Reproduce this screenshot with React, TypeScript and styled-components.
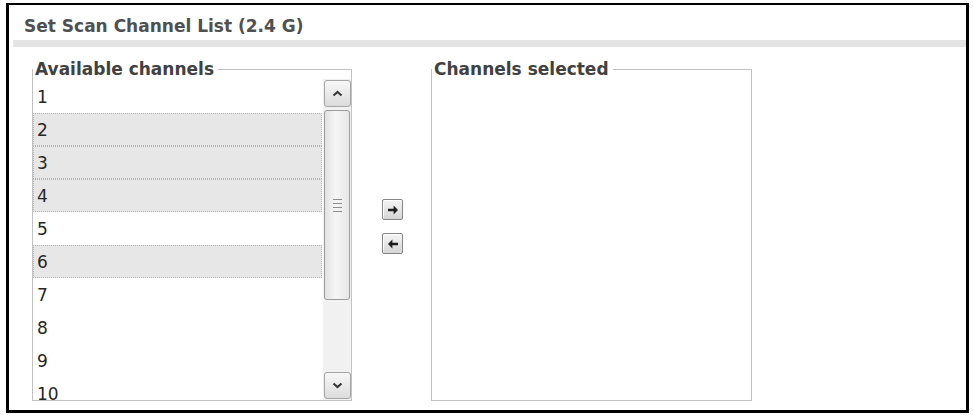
import React from "react";
import styled, { createGlobalStyle } from "styled-components";

const Global = createGlobalStyle`
  html, body { margin: 0; padding: 0; background: #fff; }
  body { font-family: "DejaVu Sans", Verdana, sans-serif; }
`;

const Frame = styled.div`
  box-sizing: border-box;
  margin: 3px 0 0 6px;
  width: 963px;
  height: 410px;
  border: 3px solid #000;
  border-top-width: 2px;
  display: flex;
  flex-direction: column;
`;

const Title = styled.h1`
  margin: 11px 0 0 15px;
  font-size: 17px;
  line-height: 20px;
  font-weight: bold;
  color: #505050;
`;

const Rule = styled.div`
  margin: 4px 0 0 4px;
  height: 7px;
  background: #e4e4e4;
`;

const Body = styled.div`
  display: flex;
  margin: 12px 0 0 23px;
`;

const Box = styled.fieldset<{ $w: number }>`
  box-sizing: border-box;
  margin: 0;
  padding: 0;
  min-width: 0;
  width: ${(p) => p.$w}px;
  height: 342px;
  border: 1px solid #c2c2c2;
  display: flex;
  flex-direction: row;
`;

const Legend = styled.legend`
  padding: 0 4px 0 2px;
  margin: 0;
  font-size: 17px;
  line-height: 20px;
  font-weight: bold;
  color: #414141;
`;

const Items = styled.div`
  flex: 1;
  height: 321px;
  overflow: hidden;
  padding-top: 1px;
  box-sizing: border-box;
`;

const Row = styled.div<{ $sel?: boolean }>`
  box-sizing: border-box;
  height: 33px;
  display: flex;
  align-items: center;
  padding-left: 3px;
  margin-right: 1px;
  font-size: 17px;
  color: #262626;
  background: ${(p) => (p.$sel ? "#e7e7e7" : "transparent")};
  border: 1px dotted ${(p) => (p.$sel ? "#b4b4b4" : "transparent")};
`;

const Scrollbar = styled.div`
  width: 28px;
  height: 321px;
  box-sizing: border-box;
  background: #f1f1f1;
  display: flex;
  flex-direction: column;
  align-items: center;
  padding: 1px 0 1px 0;
`;

const ScrollButton = styled.div`
  box-sizing: border-box;
  width: 27px;
  height: 27px;
  border: 1px solid #a5a5a5;
  border-radius: 3px;
  background: linear-gradient(#f7f7f7, #dcdcdc);
  display: flex;
  align-items: center;
  justify-content: center;
  flex-shrink: 0;
`;

const Thumb = styled.div`
  box-sizing: border-box;
  margin-top: 3px;
  width: 26px;
  height: 190px;
  border: 1px solid #9c9c9c;
  border-radius: 3px;
  background: linear-gradient(90deg, #e2e2e2, #f6f6f6 45%, #e6e6e6);
  display: flex;
  align-items: center;
  justify-content: center;
`;

const Grip = styled.span`
  width: 9px;
  height: 13px;
  background: repeating-linear-gradient(#8e8e8e 0 1px, transparent 1px 4px);
`;

const Spacer = styled.div`
  flex: 1;
`;

const Middle = styled.div`
  width: 79px;
  display: flex;
  flex-direction: column;
  padding: 140px 0 0 30px;
  box-sizing: border-box;
  gap: 13px;
`;

const MoveButton = styled.button`
  box-sizing: border-box;
  width: 21px;
  height: 21px;
  padding: 0;
  border: 1px solid #858585;
  border-radius: 2px;
  background: linear-gradient(#f5f5f5, #d6d6d6);
  box-shadow: inset 1px 1px 0 #fff;
  display: flex;
  align-items: center;
  justify-content: center;
`;

const Chevron = ({ down }: { down?: boolean }) => (
  <svg width="11" height="7" viewBox="0 0 11 7">
    <path
      d={down ? "M1.5 1.5 L5.5 5 L9.5 1.5" : "M1.5 5.5 L5.5 2 L9.5 5.5"}
      stroke="#3a3a3a"
      strokeWidth="2.2"
      fill="none"
    />
  </svg>
);

const Arrow = ({ left }: { left?: boolean }) => (
  <svg width="12" height="12" viewBox="0 0 12 12">
    <path
      d="M1 4.8h5.6V1.6L11 6l-4.4 4.4V7.2H1z"
      fill="#1e1e1e"
      transform={left ? "translate(12 0) scale(-1 1)" : undefined}
    />
  </svg>
);

const selected = new Set([2, 3, 4, 6]);
const channels = [1, 2, 3, 4, 5, 6, 7, 8, 9, 10];

export default function App() {
  return (
    <>
      <Global />
      <Frame>
        <Title>Set Scan Channel List (2.4 G)</Title>
        <Rule />
        <Body>
          <Box $w={320}>
            <Legend>Available channels</Legend>
            <Items>
              {channels.map((c) => (
                <Row key={c} $sel={selected.has(c)}>
                  {c}
                </Row>
              ))}
            </Items>
            <Scrollbar>
              <ScrollButton>
                <Chevron />
              </ScrollButton>
              <Thumb>
                <Grip />
              </Thumb>
              <Spacer />
              <ScrollButton>
                <Chevron down />
              </ScrollButton>
            </Scrollbar>
          </Box>
          <Middle>
            <MoveButton aria-label="Add">
              <Arrow />
            </MoveButton>
            <MoveButton aria-label="Remove">
              <Arrow left />
            </MoveButton>
          </Middle>
          <Box $w={321}>
            <Legend>Channels selected</Legend>
          </Box>
        </Body>
      </Frame>
    </>
  );
}
